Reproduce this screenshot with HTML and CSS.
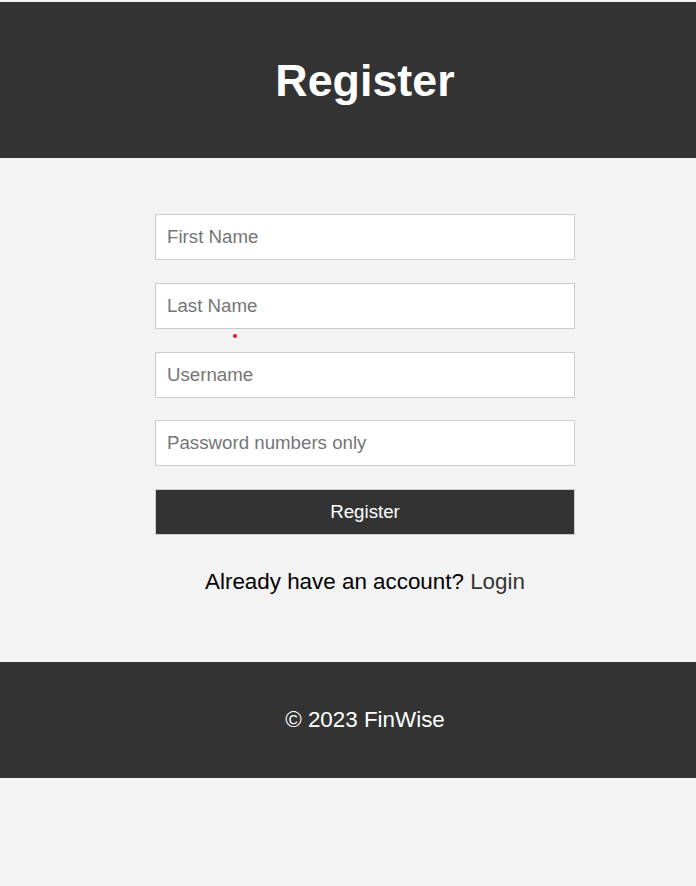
FILE: index.html
```html
<!DOCTYPE html>
<html lang="en">
<head>
<meta charset="utf-8">
<title>Register</title>
<link rel="stylesheet" href="styles.css">
</head>
<body>
<div class="page">
  <header class="site-header">
    <h1 class="title">Register</h1>
  </header>
  <main class="main">
    <form class="form">
      <input class="field" type="text" placeholder="First Name">
      <input class="field" type="text" placeholder="Last Name">
      <input class="field" type="text" placeholder="Username">
      <input class="field" type="password" placeholder="Password numbers only">
      <button class="btn" type="button">Register</button>
    </form>
    <p class="login-line">Already have an account? <a class="login-link" href="#">Login</a></p>
    <span class="dot"></span>
  </main>
  <footer class="site-footer">
    <p class="copy">© 2023 FinWise</p>
  </footer>
</div>
</body>
</html>
```
FILE: styles.css
```css
html, body {
  margin: 0;
  padding: 0;
  background: #f3f3f3;
}
body {
  font-family: "Liberation Sans", Arial, sans-serif;
  color: #000;
}
.page {
  padding-top: 2px;
}
.site-header {
  background: #333333;
  height: 156px;
  display: flex;
  align-items: center;
  justify-content: center;
  padding-left: 34px;
}
.title {
  margin: 0;
  color: #fff;
  font-size: 44.8px;
  font-weight: bold;
  line-height: 50px;
}
.main {
  position: relative;
  height: 504px;
  box-sizing: border-box;
  padding: 56px 0 0 34px;
  display: flex;
  flex-direction: column;
  align-items: center;
}
.form {
  width: 420px;
  display: flex;
  flex-direction: column;
  gap: 22.75px;
}
.field {
  box-sizing: border-box;
  width: 420px;
  height: 46px;
  margin: 0;
  padding: 0 11px;
  border: 1px solid #cccccc;
  border-radius: 0;
  background: #fff;
  font-family: "Liberation Sans", Arial, sans-serif;
  font-size: 18.7px;
  color: #333;
  outline: none;
}
.field::placeholder {
  color: #757575;
}
.btn {
  box-sizing: border-box;
  width: 420px;
  height: 46px;
  margin: 0;
  border: 1px solid #cccccc;
  border-radius: 0;
  background: #333333;
  color: #fff;
  font-family: "Liberation Sans", Arial, sans-serif;
  font-size: 18.7px;
  padding: 0;
}
.login-line {
  margin: 34px 0 0;
  font-size: 22.4px;
  line-height: 26px;
}
.login-link {
  color: #333333;
  text-decoration: none;
}
.dot {
  position: absolute;
  left: 232.5px;
  top: 175.5px;
  width: 4px;
  height: 4px;
  border-radius: 50%;
  background: #f0141c;
}
.site-footer {
  background: #333333;
  height: 116px;
  display: flex;
  align-items: center;
  justify-content: center;
  padding-left: 34px;
}
.copy {
  margin: 0;
  color: #fff;
  font-size: 22.4px;
  line-height: 26px;
}
```
